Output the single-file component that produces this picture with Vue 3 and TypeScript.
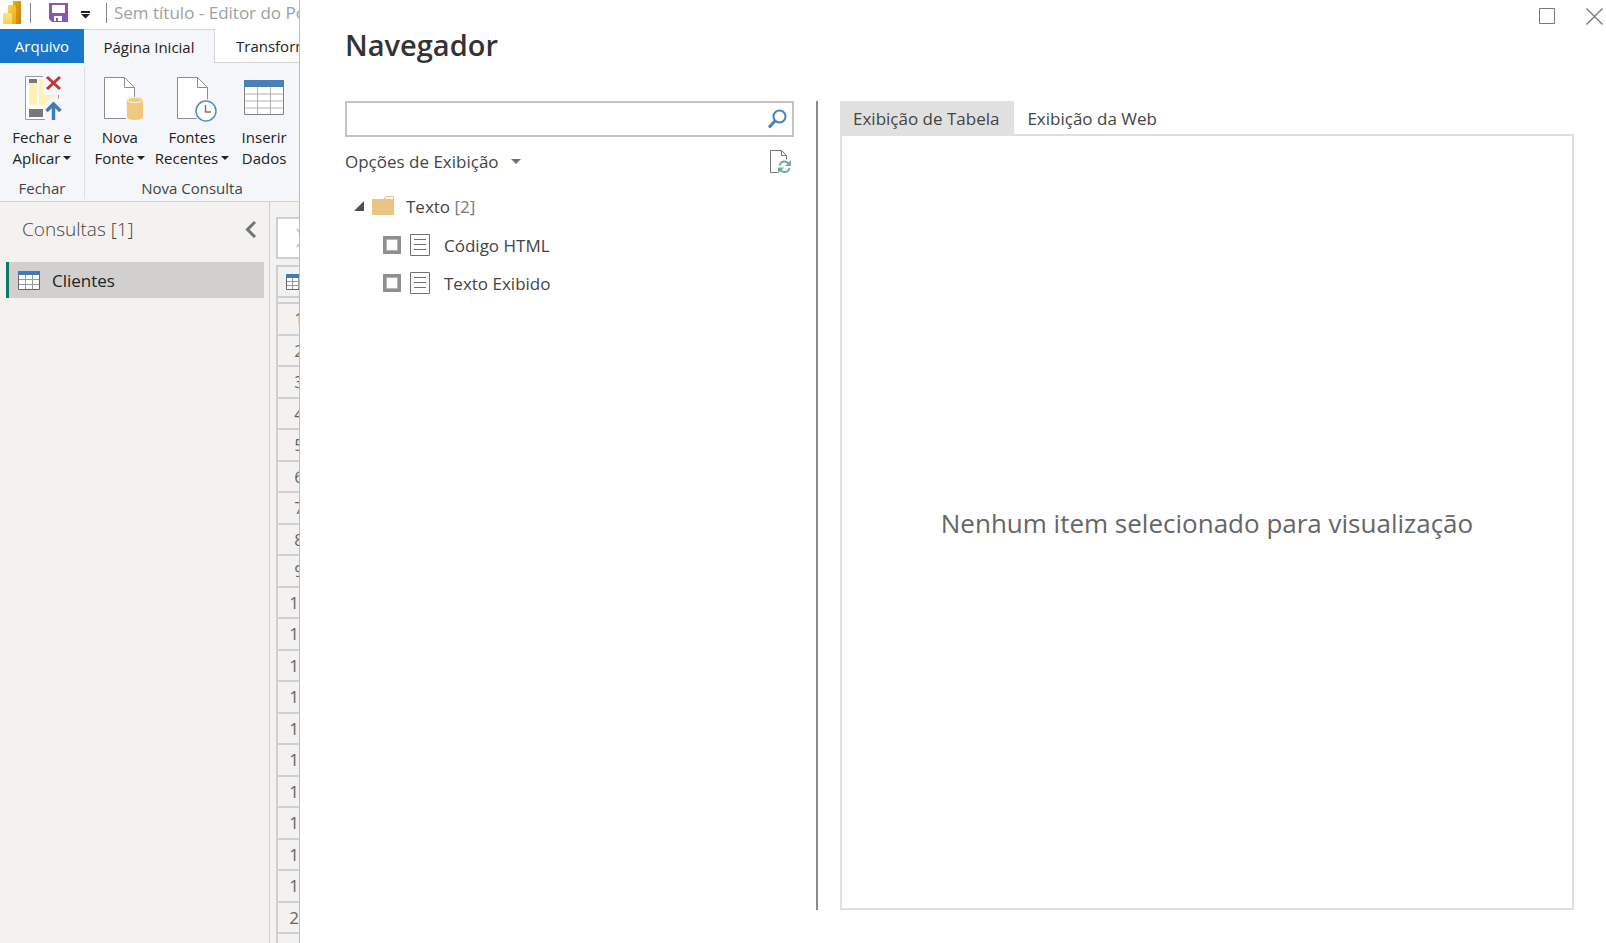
<script setup lang="ts">
import { ref } from 'vue'

interface RibbonAction {
  id: string
  lines: [string, string]
  menu: boolean
}

interface TreeItem {
  label: string
  checked: boolean
}

const closeAction: RibbonAction = { id: 'close', lines: ['Fechar e', 'Aplicar'], menu: true }
const sourceActions: RibbonAction[] = [
  { id: 'new', lines: ['Nova', 'Fonte'], menu: true },
  { id: 'recent', lines: ['Fontes', 'Recentes'], menu: true },
  { id: 'enter', lines: ['Inserir', 'Dados'], menu: false },
]
const rowNumbers: number[] = Array.from({ length: 21 }, (_, i) => i + 1)

const search = ref('')
const activeTab = ref<'table' | 'web'>('table')
const expanded = ref(true)
const items = ref<TreeItem[]>([
  { label: 'Código HTML', checked: false },
  { label: 'Texto Exibido', checked: false },
])
</script>

<template>
  <div class="screen">
    <div class="editor">
      <header class="titlebar">
        <svg class="logo" width="20" height="24" viewBox="0 0 20 24" aria-hidden="true">
          <defs>
            <linearGradient id="g1" x1="0" y1="0" x2="1" y2="1"><stop offset="0" stop-color="#e6ad10" /><stop offset="1" stop-color="#c87e0e" /></linearGradient>
            <linearGradient id="g2" x1="0" y1="0" x2="1" y2="1"><stop offset="0" stop-color="#f6d751" /><stop offset="1" stop-color="#e6ad10" /></linearGradient>
            <linearGradient id="g3" x1="0" y1="0" x2="0" y2="1"><stop offset="0" stop-color="#f9e589" /><stop offset="1" stop-color="#f6d04a" /></linearGradient>
          </defs>
          <path d="M10 0h7q1 0 1 1v21q0 1-1 1h-7z" fill="url(#g1)" />
          <path d="M5 5q0-1 1-1h5q2 0 2 2v17H5z" fill="url(#g2)" />
          <path d="M0 13q0-1 1-1h5q3 0 3 3v8H1q-1 0-1-1z" fill="url(#g3)" />
        </svg>
        <span class="bar"></span>
        <button class="plain save" aria-label="Salvar">
          <svg width="20" height="20" viewBox="0 0 20 20"><path d="M0 0h19v19H3l-3-3z" fill="#8a57ae" /><path d="M3 2h13v8H3z" fill="#fff" /><path d="M5 13h8v5H9v-3H7v3H5z" fill="#fff" /></svg>
        </button>
        <button class="plain quick" aria-label="Personalizar barra de ferramentas">
          <svg width="10" height="8" viewBox="0 0 10 8"><path d="M0 0h9v2H0zM0 3h9L4.500 7.500z" fill="#222" /></svg>
        </button>
        <span class="bar"></span>
        <span class="doc">Sem título - Editor do Power Query</span>
      </header>

      <nav class="tabs">
        <button class="tab file">Arquivo</button>
        <button class="tab home">Página Inicial</button>
        <button class="tab next">Transformar</button>
      </nav>

      <section class="ribbon">
        <div class="group close">
          <div class="actions">
            <button class="action">
              <svg width="42" height="48" viewBox="-4 0 42 48" aria-hidden="true">
                <path d="M.5 2.500h33v43H.5z" fill="#fff" stroke="#999" />
                <path d="M4 9h8v22H4zM14 5h10l8 14v12H14z" fill="#fff0b4" />
                <path d="M4 5h8v4H4zM4 35h14v8H4z" fill="#787878" />
                <path d="M18 0h20v21H18zM20 29l8-7 10 5v21H20z" fill="#f4f6f9" />
                <path d="M22 3l13 12M35 3L22 15" stroke="#c93434" stroke-width="3" fill="none" />
                <path d="M28.500 46V31M21.500 37l7-7 7 7" stroke="#437bb5" stroke-width="3.500" fill="none" />
              </svg>
              <span>{{ closeAction.lines[0] }}</span>
              <span>{{ closeAction.lines[1] }}<i class="caret"></i></span>
            </button>
          </div>
          <div class="caption">Fechar</div>
        </div>
        <div class="group query">
          <div class="actions">
            <button v-for="a in sourceActions" :key="a.id" class="action">
              <svg v-if="a.id === 'new'" width="48" height="48" viewBox="-8 0 48 48" aria-hidden="true">
                <path d="M.5 3.500h20l10 10v31H.5z" fill="#fff" stroke="#8c8c8c" /><path d="M20.500 3.500v10h10" fill="none" stroke="#8c8c8c" />
                <path d="M22 24h18v24H22z" fill="#f4f6f9" />
                <path d="M23 26v17q0 3 8 3t8-3V26q0-3-8-3t-8 3z" fill="#efc97f" /><ellipse cx="31" cy="26" rx="7.500" ry="2.500" fill="#efc97f" stroke="#fff8e8" />
              </svg>
              <svg v-else-if="a.id === 'recent'" width="51" height="48" viewBox="-10 0 51 48" aria-hidden="true">
                <path d="M.5 3.500h20l10 10v31H.5z" fill="#fff" stroke="#8c8c8c" /><path d="M20.500 3.500v10h10" fill="none" stroke="#8c8c8c" />
                <circle cx="29" cy="37" r="12" fill="#f4f6f9" /><circle cx="29" cy="37" r="10" fill="#fff" stroke="#568bc2" stroke-width="1.500" />
                <path d="M28.500 31v7H34" fill="none" stroke="#777" stroke-width="1.500" />
              </svg>
              <svg v-else width="41" height="48" viewBox="0 0 41 48" aria-hidden="true">
                <path d="M.5 6.500h39v34H.5z" fill="#fff" stroke="#808080" /><path d="M0 6h40v7H0z" fill="#4980b9" />
                <path d="M1 20h38M1 27h38M1 34h38M13.500 13v27M26.500 13v27" stroke="#b0b0b0" />
              </svg>
              <span>{{ a.lines[0] }}</span>
              <span>{{ a.lines[1] }}<i v-if="a.menu" class="caret"></i></span>
            </button>
          </div>
          <div class="caption">Nova Consulta</div>
        </div>
      </section>

      <div class="work">
        <aside class="queries">
          <div class="queries-head">
            <h2>Consultas [1]</h2>
            <button class="plain" aria-label="Recolher">
              <svg width="12" height="17" viewBox="0 0 12 17"><path d="M10 1L2.500 8.500 10 16" fill="none" stroke="#747474" stroke-width="3" /></svg>
            </button>
          </div>
          <button class="query">
            <svg width="22" height="19" viewBox="0 0 22 19" aria-hidden="true"><path d="M.5.5h21v18H.5z" fill="#fff" stroke="#666" /><path d="M0 0h22v4H0z" fill="#437ab6" /><path d="M1 8.500h20M1 13.500h20M7.500 4v14M14.500 4v14" stroke="#999" /></svg>
            Clientes
          </button>
        </aside>
        <div class="sheet">
          <div class="formula"><svg width="16" height="20" viewBox="0 0 16 20" aria-hidden="true"><path d="M1 1l14 18M15 1L1 19" stroke="#c8c8c8" stroke-width="2" /></svg></div>
          <table>
            <thead>
              <tr><th><svg width="22" height="16" viewBox="0 0 22 16" aria-label="Tabela"><path d="M.5.5h21v15H.5z" fill="#fff" stroke="#666" /><path d="M0 0h22v4H0z" fill="#437ab6" /><path d="M1 7.500h20M1 11.500h20M6.500 4v11M12.500 4v11" stroke="#999" /></svg></th></tr>
              <tr class="spacer"><td></td></tr>
            </thead>
            <tbody>
              <tr v-for="n in rowNumbers" :key="n"><td>{{ n }}</td></tr>
            </tbody>
          </table>
        </div>
      </div>
    </div>

    <main class="dialog" role="dialog" aria-labelledby="dialog-title">
      <header class="dialog-head">
        <h1 id="dialog-title">Navegador</h1>
        <div class="controls">
          <button class="plain" aria-label="Maximizar"><svg width="16" height="16" viewBox="0 0 16 16"><path d="M.5.5h15v15H.5z" fill="none" stroke="#777" /></svg></button>
          <button class="plain" aria-label="Fechar"><svg width="17" height="17" viewBox="0 0 17 17"><path d="M.5.5l16 16M16.500.5l-16 16" stroke="#777" stroke-width="1.300" /></svg></button>
        </div>
      </header>

      <div class="body">
        <section class="navigator">
          <div class="search">
            <input v-model="search" type="text" aria-label="Pesquisar" />
            <button class="plain" aria-label="Pesquisar">
              <svg width="19" height="20" viewBox="0 0 19 20"><circle cx="11.500" cy="7.500" r="6" fill="none" stroke="#4a80b8" stroke-width="2" /><path d="M7 12L1 18.500" stroke="#4a80b8" stroke-width="3" /></svg>
            </button>
          </div>
          <div class="options">
            <button class="plain text">Opções de Exibição<i class="caret"></i></button>
            <button class="plain" aria-label="Atualizar">
              <svg width="22" height="24" viewBox="0 0 22 24">
                <path d="M7.500 22.500H.5V.5h11l5 5v4M11.500.5v5h5" fill="none" stroke="#777" />
                <path d="M9.500 15.500q1-4 5-4 3 0 5 3M19.500 18q-1 4-5 4-3 0-5-3" fill="none" stroke="#77ab95" stroke-width="2" />
                <path d="M21 10v6h-6zM8 23.500v-6h6z" fill="#77ab95" />
              </svg>
            </button>
          </div>
          <div class="tree">
            <button class="plain text folder" :aria-expanded="expanded" @click="expanded = !expanded">
              <svg width="10" height="10" viewBox="0 0 10 10" aria-hidden="true"><path d="M10 0v10H0z" fill="#505050" /></svg>
              <svg width="22" height="20" viewBox="0 0 22 20" aria-hidden="true"><path d="M0 4q0-1 1-1h10l3-3h8v19H0z" fill="#ebc482" /><path d="M13 3l2-2h6v2z" fill="#fff" /></svg>
              <span>Texto <em>[2]</em></span>
            </button>
            <template v-if="expanded">
              <label v-for="item in items" :key="item.label" class="leaf">
                <input v-model="item.checked" type="checkbox" />
                <svg width="20" height="22" viewBox="0 0 20 22" aria-hidden="true"><path d="M.5.5h19v21H.5zM4 5.500h12M4 10.500h12M4 15.500h12" fill="none" stroke="#707070" /></svg>
                <span>{{ item.label }}</span>
              </label>
            </template>
          </div>
        </section>
        <div class="divider"></div>
        <section class="preview">
          <div class="views" role="tablist">
            <button role="tab" :aria-selected="activeTab === 'table'" :class="{ on: activeTab === 'table' }" @click="activeTab = 'table'">Exibição de Tabela</button>
            <button role="tab" :aria-selected="activeTab === 'web'" :class="{ on: activeTab === 'web' }" @click="activeTab = 'web'">Exibição da Web</button>
          </div>
          <div class="panel" role="tabpanel"><p>Nenhum item selecionado para visualização</p></div>
        </section>
      </div>
    </main>
  </div>
</template>

<style>
body {
  margin: 0;
}
</style>

<style scoped>
.screen {
  display: flex;
  height: 100vh;
  overflow: hidden;
  background: #fff;
  color: #444;
  font-family: 'Open Sans', 'Noto Sans', sans-serif;
  font-size: 17px;
}
* {
  box-sizing: border-box;
}
button {
  font: inherit;
  color: inherit;
  white-space: nowrap;
}
svg {
  display: block;
  flex: none;
}
.plain {
  display: flex;
  align-items: center;
  padding: 0;
  border: 0;
  background: none;
}
.caret {
  display: inline-block;
  border: 4px solid transparent;
  border-top: 4px solid #222;
  border-bottom: 0;
  margin-left: 3px;
  vertical-align: 4px;
}

/* Editor window */
.editor {
  display: flex;
  flex-direction: column;
  flex: 0 0 299px;
  overflow: hidden;
}
.titlebar {
  display: flex;
  align-items: center;
  height: 29px;
  flex: none;
  padding: 0 0 4px 3px;
  white-space: nowrap;
  color: #a0a0a0;
}
.bar {
  flex: none;
  width: 1px;
  height: 20px;
  background: #888;
}
.logo {
  margin-right: 7px;
}
.save {
  margin-left: 18px;
}
.quick {
  margin: 4px 15px 0 12px;
}
.doc {
  margin-left: 7px;
}
.tabs {
  display: flex;
  height: 34px;
  flex: none;
  font-size: 15px;
}
.tab {
  flex: none;
  padding: 0;
  border: 0;
  border-bottom: 1px solid #d5d5d5;
  background: #fff;
  color: #222;
}
.tab.file {
  width: 84px;
  border: 0;
  background: #1877cb;
  color: #fff;
}
.tab.home {
  width: 131px;
  border: 1px solid #d5d5d5;
  border-width: 1px 1px 0 0;
  background: #f4f6f9;
}
.tab.next {
  padding-left: 21px;
  padding-right: 21px;
}
.ribbon {
  display: flex;
  height: 139px;
  flex: none;
  padding: 4px 0 2px;
  border-bottom: 1px solid #d2d2d4;
  background: #f4f6f9;
  font-size: 15px;
}
.group {
  display: flex;
  flex-direction: column;
  justify-content: space-between;
}
.group.close {
  flex: 0 0 85px;
  border-right: 1px solid #dcdee0;
}
.group.query {
  flex: 1;
}
.actions {
  display: grid;
  grid-auto-flow: column;
  grid-auto-columns: 1fr;
}
.action {
  display: flex;
  flex-direction: column;
  align-items: center;
  padding: 7px 0 0;
  border: 0;
  background: none;
  color: #222;
  line-height: 21px;
}
.action svg {
  margin-bottom: 5px;
}
.caption {
  text-align: center;
  line-height: 22px;
}
.work {
  display: flex;
  flex: 1;
  min-height: 0;
  background: #f3f2f0;
}
.queries {
  flex: 0 0 270px;
  padding: 0 5px 0 6px;
  border-right: 1px solid #cfcfcf;
}
.queries-head {
  display: flex;
  justify-content: space-between;
  align-items: center;
  height: 54px;
  margin-bottom: 6px;
  padding: 0 7px 0 16px;
}
.queries-head h2 {
  margin: 0;
  font-size: 19px;
  font-weight: 300;
}
.queries .query {
  display: flex;
  align-items: center;
  gap: 12px;
  width: 100%;
  height: 36px;
  padding: 0 9px;
  border: 0;
  border-left: 3px solid #117865;
  background: #d1d0ce;
  color: #222;
}
.sheet {
  flex: 1;
  min-width: 0;
  padding: 15px 0 0 6px;
  overflow: hidden;
}
.formula {
  display: flex;
  align-items: center;
  width: 60px;
  height: 42px;
  margin-bottom: 6px;
  padding-left: 18px;
  border: 2px solid #cfcfcf;
  background: #fff;
}
table {
  border-spacing: 0;
  width: 46px;
  border: 2px solid #cfcfcf;
  table-layout: fixed;
  color: #666;
}
th,
td {
  height: 32px;
  padding: 0;
  border-bottom: 2px solid #cfcfcf;
  line-height: 24px;
  text-align: center;
}
th {
  height: 31px;
  padding-left: 8px;
}
.spacer td {
  height: 6px;
  line-height: 0;
}
tbody tr:nth-child(even) td {
  height: 31px;
}

/* Navigator window */
.dialog {
  display: flex;
  flex-direction: column;
  flex: 1;
  min-width: 0;
  padding: 0 32px 33px 45px;
  border-left: 1px solid #bdbdbd;
}
.dialog-head {
  display: flex;
  justify-content: space-between;
  height: 101px;
  flex: none;
  margin-right: -29px;
}
h1 {
  margin: 0;
  padding-top: 24px;
  color: #333;
  font-size: 29px;
  font-weight: 600;
  line-height: 42px;
}
.controls {
  display: flex;
  align-items: flex-start;
  gap: 31px;
  padding-top: 8px;
}
.body {
  display: grid;
  grid-template-columns: 449fr 2px 734fr;
  column-gap: 22px;
  flex: 1;
  min-height: 0;
}
.divider {
  background: #8a8a8a;
}
.search {
  display: flex;
  align-items: center;
  height: 36px;
  padding-right: 5px;
  border: 2px solid #c3c3c3;
}
.search input {
  flex: 1;
  min-width: 0;
  height: 100%;
  padding: 0 8px;
  border: 0;
  outline: 0;
  background: none;
  font: inherit;
}
.options {
  display: flex;
  align-items: center;
  justify-content: space-between;
  height: 49px;
  padding-right: 2px;
}
.options .caret {
  border-width: 5px 5px 0;
  border-top-color: #707070;
  margin-left: 12px;
}
.folder {
  height: 40px;
  padding-left: 9px;
}
.folder svg + svg {
  margin: 0 12px 0 8px;
}
.folder em {
  color: #777;
  font-style: normal;
}
.leaf {
  display: flex;
  align-items: center;
  height: 38px;
  padding-left: 38px;
}
.leaf input {
  appearance: none;
  width: 18px;
  height: 18px;
  margin: 0 9px 0 0;
  border: 3px solid #8f8f8f;
  outline: 1px solid #b5b5b5;
  outline-offset: -4px;
}
.leaf input:checked {
  background: #4a80b8;
}
.leaf span {
  margin-left: 14px;
}
.preview {
  display: flex;
  flex-direction: column;
}
.views {
  display: flex;
  height: 33px;
}
.views button {
  padding: 2px 15px 0 13px;
  border: 0;
  background: none;
}
.views .on {
  background: #e0e0e0;
}
.panel {
  display: flex;
  align-items: center;
  justify-content: center;
  flex: 1;
  border: 2px solid #e0e0e0;
}
.panel p {
  margin: 0;
  padding-top: 2px;
  color: #666;
  font-size: 26px;
}
</style>
